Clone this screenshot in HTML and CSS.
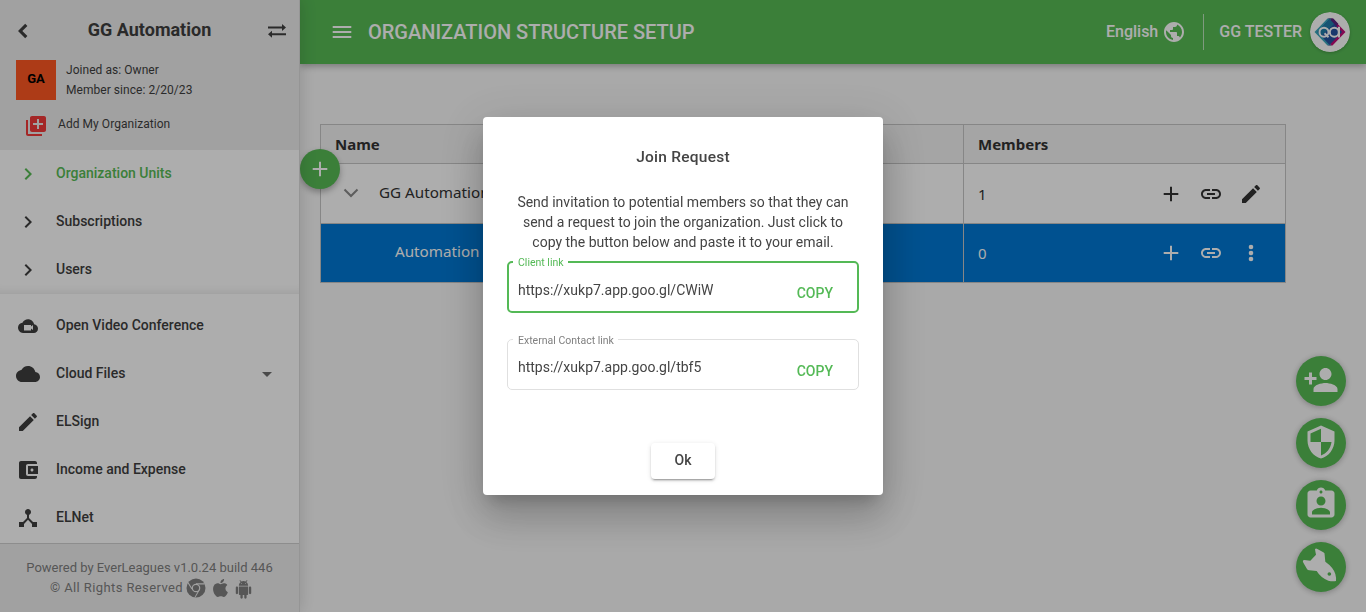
FILE: index.html
```html
<!DOCTYPE html>
<html lang="en">
<head>
<meta charset="utf-8">
<title>Organization Structure Setup</title>
<link rel="stylesheet" href="styles.css">
</head>
<body>
<div class="app">
  <aside class="sidebar">
    <div class="org">
      <div class="org-top">
        <svg class="back" viewBox="0 0 12 16"><path d="M9.300 1.800L3.200 8l6.100 6.200" fill="none" stroke="currentColor" stroke-width="3.100"/></svg>
        <h2 class="org-name">GG Automation</h2>
        <svg class="swap" viewBox="0 0 20 14"><path d="M1 2.500h14V0L19 3.500 15 7V4.500H1zM19 9.200H5V6.700L1 10.200l4 3.500V11.200H19z"/></svg>
      </div>
      <div class="org-info">
        <div class="org-badge">GA</div>
        <div class="org-lines"><div class="joined">Joined as: Owner</div><div class="since">Member since: 2/20/23</div></div>
      </div>
      <div class="org-add">
        <svg class="icon" viewBox="0 0 24 24"><path d="M4 6H2v14c0 1.100.9 2 2 2h14v-2H4V6zm16-4H8c-1.100 0-2 .9-2 2v12c0 1.100.9 2 2 2h12c1.100 0 2-.9 2-2V4c0-1.100-.9-2-2-2zm-1 9h-4v4h-2v-4H9V9h4V5h2v4h4v2z"/></svg>
        <span>Add My Organization</span>
      </div>
    </div>
    <nav class="nav nav-main">
      <a class="item active"><svg class="icon" viewBox="0 0 24 24"><path d="M10 6L8.590 7.410 13.170 12l-4.580 4.590L10 18l6-6z"/></svg><span>Organization Units</span></a>
      <a class="item"><svg class="icon" viewBox="0 0 24 24"><path d="M10 6L8.590 7.410 13.170 12l-4.580 4.590L10 18l6-6z"/></svg><span>Subscriptions</span></a>
      <a class="item"><svg class="icon" viewBox="0 0 24 24"><path d="M10 6L8.590 7.410 13.170 12l-4.580 4.590L10 18l6-6z"/></svg><span>Users</span></a>
    </nav>
    <nav class="nav nav-apps">
      <a class="item"><svg class="icon" viewBox="0 0 24 24"><path fill-rule="evenodd" d="M18.100 10.300C17.540 7.460 15.040 5.300 12 5.300c-2.400 0-4.500 1.370-5.550 3.370C3.950 8.930 2 11.050 2 13.600c0 2.900 2.200 5.400 5 5.400h10.800c2.300 0 4.200-2 4.200-4.350 0-2.200-1.700-4.200-3.900-4.350zM8 11h7v1.600l2-1.500v5l-2-1.500v2H8z"/></svg><span>Open Video Conference</span></a>
      <a class="item"><svg class="icon" viewBox="0 0 24 24"><path d="M19.350 10.040C18.670 6.590 15.640 4 12 4 9.110 4 6.600 5.640 5.350 8.040 2.340 8.360 0 10.910 0 14c0 3.310 2.690 6 6 6h13c2.760 0 5-2.240 5-5 0-2.640-2.050-4.780-4.650-4.960z"/></svg><span>Cloud Files</span><svg class="icon caret" viewBox="0 0 24 24"><path d="M7 10l5 5 5-5z"/></svg></a>
      <a class="item"><svg class="icon" viewBox="0 0 24 24"><path d="M3 17.250V21h3.750L17.810 9.940l-3.750-3.750L3 17.250zM20.710 7.040c.39-.39.39-1.020 0-1.410l-2.340-2.340c-.39-.39-1.020-.39-1.410 0l-1.830 1.830 3.750 3.750 1.830-1.830z"/></svg><span>ELSign</span></a>
      <a class="item"><svg class="icon" viewBox="0 0 24 24"><path d="M21 18v1c0 1.100-.9 2-2 2H5c-1.110 0-2-.9-2-2V5c0-1.100.89-2 2-2h14c1.100 0 2 .9 2 2v1h-9c-1.110 0-2 .9-2 2v8c0 1.100.89 2 2 2h9zm-9-2h10V8H12v8zm4-2.500c-.83 0-1.500-.67-1.500-1.500s.67-1.500 1.500-1.500 1.500.67 1.500 1.500-.67 1.500-1.500 1.500z"/></svg><span>Income and Expense</span></a>
      <a class="item"><svg class="icon" viewBox="0 0 24 24"><path d="M17 16l-4-4V8.820C14.160 8.400 15 7.300 15 6c0-1.660-1.340-3-3-3S9 4.340 9 6c0 1.300.84 2.400 2 2.820V12l-4 4H3v5h5v-3.050l4-4.200 4 4.200V21h5v-5h-4z"/></svg><span>ELNet</span></a>
    </nav>
    <footer class="side-foot">
      <div class="powered">Powered by EverLeagues v1.0.24 build 446</div>
      <div class="rights"><span class="rights-text">© All Rights Reserved</span>
        <svg class="chrome" viewBox="0 0 20 20"><circle cx="10" cy="10" r="9.500"/><circle class="cut" cx="10" cy="10" r="4.300"/><path class="cut" d="M10 5.200h8.700v1.200H10zM5.500 11.300L1.600 5l.8-.8 4.100 6.500zM13.600 12.200l-4.200 7.300-1-.1 4.300-7.700z"/><circle cx="10" cy="10" r="3.100"/></svg>
        <svg class="apple" viewBox="3 1 18 22"><path d="M18.710 19.500C17.880 20.740 17 21.950 15.660 21.970C14.320 22 13.890 21.180 12.370 21.180C10.840 21.180 10.370 21.950 9.100 22C7.790 22.050 6.800 20.680 5.960 19.470C4.250 17 2.940 12.450 4.700 9.390C5.570 7.870 7.130 6.910 8.820 6.880C10.100 6.860 11.320 7.750 12.110 7.750C12.890 7.750 14.370 6.680 15.920 6.840C16.570 6.870 18.390 7.100 19.560 8.820C19.470 8.880 17.390 10.100 17.410 12.630C17.440 15.650 20.060 16.660 20.090 16.670C20.060 16.740 19.670 18.110 18.710 19.500M13 3.500C13.730 2.670 14.940 2.040 15.940 2C16.070 3.170 15.600 4.350 14.900 5.190C14.210 6.040 13.070 6.700 11.950 6.610C11.800 5.460 12.360 4.260 13 3.500Z"/></svg>
        <svg class="android" viewBox="1 0 22 24"><path d="M6 18c0 .55.45 1 1 1h1v3.500c0 .83.67 1.500 1.500 1.500s1.500-.67 1.500-1.500V19h2v3.500c0 .83.67 1.500 1.500 1.500s1.500-.67 1.500-1.500V19h1c.55 0 1-.45 1-1V8H6v10zM3.500 8C2.670 8 2 8.670 2 9.500v7c0 .83.67 1.500 1.500 1.500S5 17.330 5 16.500v-7C5 8.670 4.330 8 3.500 8zm17 0c-.83 0-1.500.67-1.500 1.500v7c0 .83.67 1.500 1.500 1.500s1.500-.67 1.500-1.500v-7c0-.83-.67-1.500-1.500-1.500zm-4.970-5.840l1.300-1.300c.2-.2.2-.51 0-.71-.2-.2-.51-.2-.71 0l-1.480 1.480C13.850 1.230 12.950 1 12 1c-.96 0-1.860.23-2.660.63L7.850.15c-.2-.2-.51-.2-.71 0-.2.2-.2.51 0 .71l1.310 1.310C6.970 3.260 6 5.010 6 7h12c0-1.990-.97-3.750-2.470-4.840zM10 5H9V4h1v1zm5 0h-1V4h1v1z"/></svg>
      </div>
    </footer>
  </aside>

  <div class="page">
    <header class="topbar">
      <svg class="icon menu" viewBox="0 0 24 24"><path d="M2.700 18h18.600v-2H2.700zm0-5h18.600v-2H2.700zm0-7v2h18.600V6z"/></svg>
      <h1 class="page-title">ORGANIZATION STRUCTURE SETUP</h1>
      <span class="lang">English</span>
      <svg class="icon globe" viewBox="0 0 24 24"><path d="M12 2C6.480 2 2 6.480 2 12s4.480 10 10 10 10-4.480 10-10S17.520 2 12 2zm-1 17.930c-3.950-.49-7-3.850-7-7.930 0-.62.08-1.210.21-1.790L9 15v1c0 1.100.9 2 2 2v1.930zm6.900-2.540c-.26-.81-1-1.390-1.900-1.390h-1v-3c0-.55-.45-1-1-1H8v-2h2c.55 0 1-.45 1-1V7h2c1.100 0 2-.9 2-2v-.41c2.930 1.190 5 4.060 5 7.410 0 2.080-.8 3.970-2.100 5.390z"/></svg>
      <span class="bar"></span>
      <span class="user">GG TESTER</span>
      <svg class="avatar" viewBox="0 0 40 40">
        <circle cx="20" cy="20" r="20" fill="#fff"/>
        <path d="M18 6.500h4.500L35.500 20 22.500 33.500H18L31 20z" fill="#c20c78"/>
        <path d="M18.500 6.500h4.800l5 5.200-2.700 3.500z" fill="#5a267f"/>
        <path d="M17.500 6.500L4.500 20l13 13.500h4L9 20 21.500 6.500z" fill="#3ba6bc"/>
        <path d="M19.500 7L7.500 20l12 13L32 20z" fill="#2451a0"/>
        <path d="M19.500 7L7.500 20l4 4L24 12z" fill="#237ca8"/>
        <g fill="none" stroke="#fff" stroke-width="2"><circle cx="14" cy="20.200" r="4.500"/><path d="M14.500 21.200l4 4"/><circle cx="24.300" cy="20.200" r="4.500"/><path d="M29 14.800v10.700"/></g>
      </svg>
    </header>
    <main class="content">
      <div class="table">
        <div class="cell head">Name</div><div class="cell head">Members</div>
        <div class="cell row first"><svg class="chev" viewBox="0 0 16 10"><path d="M1.500 1.500L8 8l6.500-6.500" fill="none" stroke="currentColor" stroke-width="2"/></svg><span class="unit">GG Automation</span></div>
        <div class="cell row members"><span class="count">1</span>
          <svg class="icon" viewBox="0 0 24 24"><path d="M19.300 13h-6.300v6.300h-2V13H4.700v-2H11V4.700h2V11h6.300z"/></svg>
          <svg class="icon" viewBox="0 0 24 24"><path d="M3.900 12c0-1.710 1.390-3.100 3.100-3.100h4V7H7c-2.760 0-5 2.240-5 5s2.240 5 5 5h4v-1.900H7c-1.710 0-3.100-1.390-3.100-3.100zM8 13h8v-2H8v2zm9-6h-4v1.900h4c1.710 0 3.100 1.390 3.100 3.100s-1.390 3.100-3.100 3.100h-4V17h4c2.760 0 5-2.240 5-5s-2.240-5-5-5z"/></svg>
          <svg class="icon" viewBox="0 0 24 24"><path d="M3 17.250V21h3.750L17.810 9.940l-3.750-3.750L3 17.250zM20.710 7.040c.39-.39.39-1.020 0-1.410l-2.340-2.340c-.39-.39-1.020-.39-1.410 0l-1.830 1.830 3.750 3.750 1.830-1.830z"/></svg>
        </div>
        <div class="cell row selected child"><span class="unit">Automation</span></div>
        <div class="cell row selected members"><span class="count">0</span>
          <svg class="icon" viewBox="0 0 24 24"><path d="M19.300 13h-6.300v6.300h-2V13H4.700v-2H11V4.700h2V11h6.300z"/></svg>
          <svg class="icon" viewBox="0 0 24 24"><path d="M3.900 12c0-1.710 1.390-3.100 3.100-3.100h4V7H7c-2.760 0-5 2.240-5 5s2.240 5 5 5h4v-1.900H7c-1.710 0-3.100-1.390-3.100-3.100zM8 13h8v-2H8v2zm9-6h-4v1.900h4c1.710 0 3.100 1.390 3.100 3.100s-1.390 3.100-3.100 3.100h-4V17h4c2.760 0 5-2.240 5-5s-2.240-5-5-5z"/></svg>
          <svg class="icon" viewBox="0 0 24 24"><circle cx="12" cy="6" r="2.300"/><circle cx="12" cy="12" r="2.300"/><circle cx="12" cy="18" r="2.300"/></svg>
        </div>
      </div>
    </main>
    <button class="fab-add"><svg class="icon" viewBox="0 0 24 24"><path d="M19.300 13h-6.300v6.300h-2V13H4.700v-2H11V4.700h2V11h6.300z"/></svg></button>
    <div class="fabs">
      <button class="fab high"><svg viewBox="0 0 24 24"><path d="M15 12c2.210 0 4-1.790 4-4s-1.790-4-4-4-4 1.790-4 4 1.790 4 4 4zm-9-2V7H4v3H1v2h3v3h2v-3h3v-2H6zm9 4c-2.670 0-8 1.340-8 4v2h16v-2c0-2.660-5.330-4-8-4z"/></svg></button>
      <button class="fab high"><svg viewBox="0 0 24 24"><path d="M12 1L3 5v6c0 5.550 3.840 10.740 9 12 5.160-1.260 9-6.450 9-12V5l-9-4zm0 10.990h7c-.53 4.120-3.280 7.790-7 8.940V12H5V6.300l7-3.110v8.800z"/></svg></button>
      <button class="fab high"><svg viewBox="0 0 24 24"><path d="M19 3h-4.180C14.400 1.840 13.300 1 12 1c-1.300 0-2.400.84-2.820 2H5c-1.100 0-2 .9-2 2v14c0 1.100.9 2 2 2h14c1.100 0 2-.9 2-2V5c0-1.100-.9-2-2-2zm-7 0c.55 0 1 .45 1 1s-.45 1-1 1-1-.45-1-1 .45-1 1-1zm0 4c1.660 0 3 1.340 3 3s-1.340 3-3 3-3-1.340-3-3 1.340-3 3-3zm6 12H6v-1.400c0-2 4-3.100 6-3.100s6 1.100 6 3.100V19z"/></svg></button>
      <button class="fab fish"><svg viewBox="48 201 150 150"><path fill-rule="evenodd" d="M105 223Q107 219 112 222L130 232Q135 234 134 240L136 260Q160 277 166 297Q169 308 168 318Q157 320 145 317Q122 308 110 288L88 286Q83 286 81 282L70 263Q66 256 73 255L91 257L108 239Q106 230 105 223ZM148 291.500A5.500 5.500 0 1 0 148 302.500A5.500 5.500 0 1 0 148 291.500Z"/></svg></button>
    </div>
  </div>
</div>

<div class="overlay">
  <section class="modal">
    <h3 class="modal-title">Join Request</h3>
    <p class="modal-text">Send invitation to potential members so that they can<br>send a request to join the organization. Just click to<br>copy the button below and paste it to your email.</p>
    <fieldset class="field focused"><legend>Client link</legend><div class="field-row"><span class="url">https://xukp7.app.goo.gl/CWiW</span><span class="copy">COPY</span></div></fieldset>
    <fieldset class="field"><legend>External Contact link</legend><div class="field-row"><span class="url">https://xukp7.app.goo.gl/tbf5</span><span class="copy">COPY</span></div></fieldset>
    <button class="ok">Ok</button>
  </section>
</div>
</body>
</html>
```
FILE: styles.css
```css
* { box-sizing: border-box; }
body { margin: 0; height: 612px; overflow: hidden; font-family: Roboto, "Liberation Sans", sans-serif; color: #3f3f3f; background: #fafafa; }
h1, h2, h3, p { margin: 0; font-weight: 500; }
button { border: 0; padding: 0; font-family: inherit; }
svg { display: block; flex: none; fill: currentColor; }
span, h1, h2, h3 { white-space: nowrap; }
.icon { width: 24px; height: 24px; }

.app { display: flex; height: 612px; }

.sidebar { width: 300px; display: flex; flex-direction: column; flex: none; background: #fff; border-right: 1px solid #dcdcdc; box-shadow: 0 0 16px rgba(0,0,0,.16); z-index: 2; }
.org { height: 150px; background: #eee; }
.org-top { display: flex; align-items: center; height: 60px; padding: 2px 12px 0 17px; }
.back { width: 12px; height: 16px; }
.org-name { flex: 1; text-align: center; font-size: 18px; font-weight: 700; line-height: 24px; padding: 0 0 3px 3px; }
.swap { width: 20px; height: 14px; }
.org-info { display: flex; height: 40px; padding-left: 16px; gap: 10px; }
.org-badge { width: 40px; height: 40px; line-height: 38px; text-align: center; font-size: 13px; font-weight: 700; background: #ff5722; color: #000; }
.org-lines { font-size: 12px; line-height: 20px; letter-spacing: .05px; }
.org-add { display: flex; align-items: center; height: 52px; padding-left: 24px; gap: 10px; font-size: 12px; letter-spacing: .05px; }
.org-add .icon { color: #f23a3a; }
.org-add span { padding-bottom: 4px; }
.nav { font-size: 14px; font-weight: 500; }
.nav-main { height: 144px; border-bottom: 1px solid #f0f0f0; box-shadow: inset 0 -9px 8px -8px rgba(0,0,0,.09); }
.nav-apps { padding-top: 8px; height: 249px; }
.item { display: flex; align-items: center; height: 48px; padding: 0 20px 0 16px; gap: 16px; }
.item span { flex: 1; padding-bottom: 2px; }
.item.active { color: #57bb55; }
.caret { color: #6d6d6d; }
.side-foot { flex: 1; border-top: 1px solid #d0d0d0; background: #eee; color: #7f7f7f; padding-top: 14px; font-size: 13px; line-height: 20px; text-align: center; }
.rights { display: flex; justify-content: center; align-items: center; height: 20px; padding-left: 3px; }
.rights-text { letter-spacing: .4px; }
.chrome { width: 20px; height: 20px; margin-left: 3px; }
.chrome .cut { fill: #eee; }
.apple { width: 17px; height: 20px; margin-left: 6px; }
.android { width: 17px; height: 19px; margin: 2px 0 0 6px; }

.page { flex: 1; position: relative; }
.topbar { position: relative; height: 64px; display: flex; align-items: center; padding: 0 16px 0 30px; background: #57bb55; color: #fff; box-shadow: 0 2px 7px rgba(0,0,0,.3); }
.page-title { flex: 1; margin-left: 14px; font-size: 20px; line-height: 24px; }
.lang, .user { font-size: 16px; font-weight: 500; }
.lang, .user { padding-bottom: 1px; }
.globe { margin-left: 4px; }
.bar { width: 1px; height: 36px; margin: 0 15px 0 17px; background: rgba(255,255,255,.6); }
.avatar { width: 40px; height: 40px; margin-left: 8px; border-radius: 50%; box-shadow: 0 1px 3px rgba(0,0,0,.2); }

.content { padding: 60px 80px 0 20px; }
.table { display: grid; grid-template-columns: 643px 322px; grid-template-rows: 39px 60px 59px; width: 966px; border-left: 1px solid #c6c6c6; border-top: 1px solid #c6c6c6; font-family: "Noto Sans", sans-serif; font-size: 16px; color: #333; }
.cell { display: flex; align-items: center; border-right: 1px solid #c6c6c6; border-bottom: 1px solid #c6c6c6; padding-left: 14px; }
.head { background: #f4f4f4; font-weight: 700; font-size: 15px; }
.row { background: #fff; }
.selected { background: #0078d4; color: #fff; }
.first { padding-left: 22px; }
.chev { width: 16px; height: 10px; margin-right: 20px; color: #8a8a8a; margin-top: -1px; }
.unit { font-size: 15.200px; padding-bottom: 4px; }
.child { padding-left: 74px; }
.members { gap: 16px; padding-right: 22px; }
.count { flex: 1; font-size: 15px; }

.fab-add { position: absolute; left: 0; top: 149px; width: 40px; height: 40px; border-radius: 50%; display: grid; place-items: center; background: #57bb55; color: #fff; box-shadow: 0 3px 6px rgba(0,0,0,.3); }
.fabs { position: absolute; right: 20px; top: 356px; display: grid; gap: 12px; }
.fab { width: 50px; height: 50px; border-radius: 50%; display: grid; place-items: center; background: #57bb55; color: #fff; box-shadow: 0 1px 6px rgba(0,0,0,.28); }
.fab svg { width: 36px; height: 36px; }
.high { padding-bottom: 3px; }
.fish svg { width: 50px; height: 50px; }

.overlay { position: fixed; inset: 0; z-index: 10; display: grid; place-items: center; background: rgba(0,0,0,.32); }
.modal { width: 400px; height: 378px; padding: 28px 24px 16px; display: flex; flex-direction: column; align-items: center; background: #fff; border-radius: 4px; color: #444; box-shadow: 0 11px 15px -7px rgba(0,0,0,.2), 0 24px 38px 3px rgba(0,0,0,.14), 0 9px 46px 8px rgba(0,0,0,.12); }
.modal-title { font-size: 15.500px; line-height: 24px; letter-spacing: .25px; }
.modal-text { margin-top: 23px; font-size: 14px; font-weight: 400; line-height: 20px; text-align: center; }
.field { width: 352px; height: 57px; margin: 4px 0 0; padding: 0; border: 2px solid #54b956; border-radius: 5px; min-width: 0; }
.field legend { margin-left: 4px; padding: 0 4px 0 5px; font-size: 10.500px; line-height: 14px; height: 12px; color: #54b956; }
.field + .field { border: 1px solid #e0e0e0; margin-top: 20px; }
.field + .field legend { margin-left: 5px; line-height: 15px; color: #808080; }
.field-row { display: flex; justify-content: space-between; padding: 12px 24px 0 9px; font-size: 14px; line-height: 20px; }
.field + .field .field-row { padding: 12px 25px 0 10px; }
.copy { color: #54b956; font-weight: 500; padding-top: 3px; }
.field + .field .copy { padding-top: 4px; }
.ok { width: 64px; height: 36px; margin-top: auto; padding-bottom: 2px; border-radius: 4px; background: #fff; color: #444; font-size: 14px; font-weight: 500; box-shadow: 0 3px 1px -2px rgba(0,0,0,.2), 0 2px 2px rgba(0,0,0,.14), 0 1px 5px rgba(0,0,0,.12); }
```
